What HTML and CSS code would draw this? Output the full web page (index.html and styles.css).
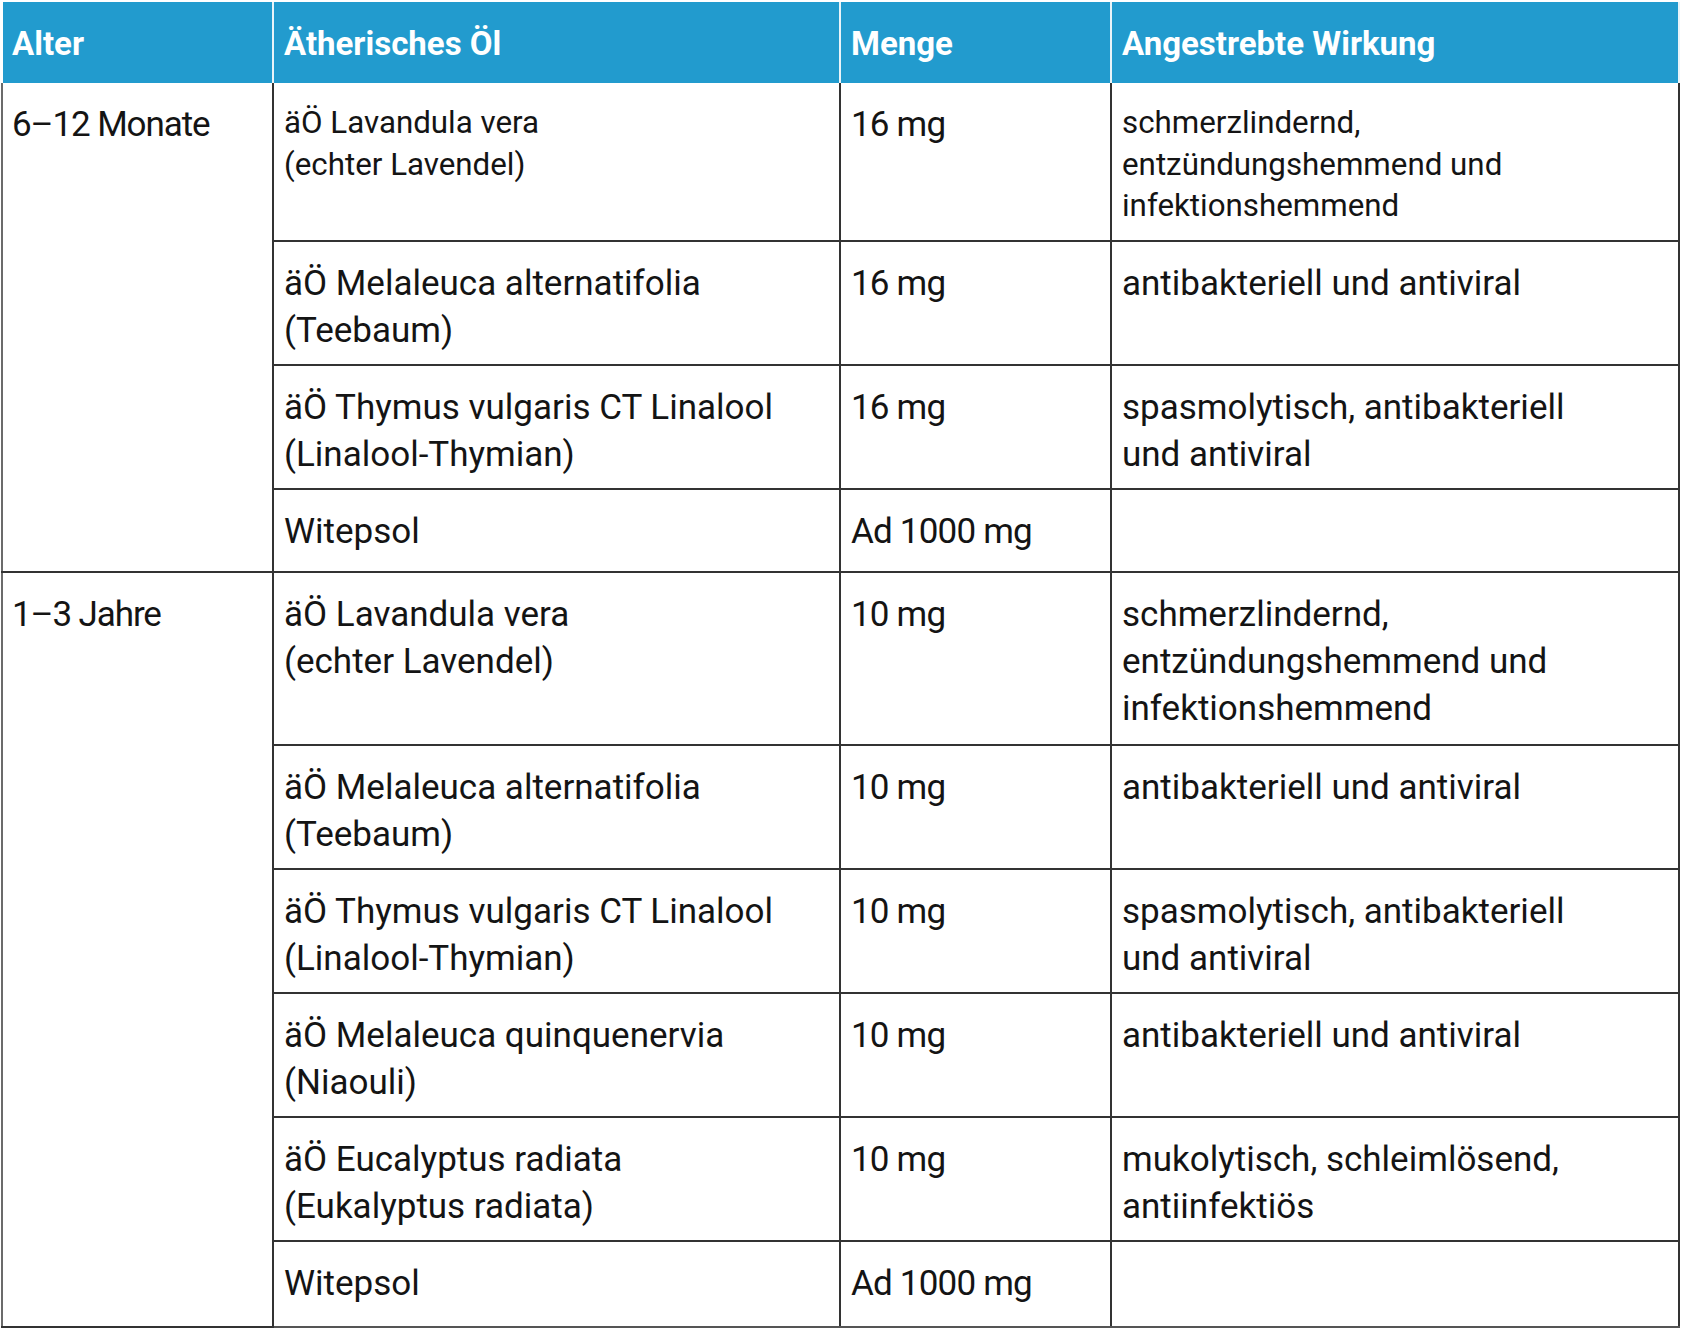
FILE: index.html
```html
<!DOCTYPE html>
<html lang="de">
<head>
<meta charset="utf-8">
<title>Ätherische Öle – Zäpfchen</title>
<link rel="stylesheet" href="styles.css">
</head>
<body>
<table class="oil-table">
  <colgroup>
    <col class="c-age">
    <col class="c-oil">
    <col class="c-amount">
    <col class="c-effect">
  </colgroup>
  <thead>
    <tr class="head">
      <th>Alter</th>
      <th>Ätherisches Öl</th>
      <th>Menge</th>
      <th>Angestrebte Wirkung</th>
    </tr>
  </thead>
  <tbody>
    <tr class="first">
      <td rowspan="4" class="age">6–12 Monate</td>
      <td class="small">äÖ Lavandula vera<br>(echter Lavendel)</td>
      <td class="amount">16 mg</td>
      <td class="small">schmerzlindernd,<br>entzündungshemmend und<br>infektionshemmend</td>
    </tr>
    <tr>
      <td>äÖ Melaleuca alternatifolia<br>(Teebaum)</td>
      <td class="amount">16 mg</td>
      <td>antibakteriell und antiviral</td>
    </tr>
    <tr>
      <td>äÖ Thymus vulgaris CT Linalool<br>(Linalool-Thymian)</td>
      <td class="amount">16 mg</td>
      <td>spasmolytisch, antibakteriell<br>und antiviral</td>
    </tr>
    <tr class="base">
      <td>Witepsol</td>
      <td class="amount">Ad 1000 mg</td>
      <td></td>
    </tr>
    <tr class="tall">
      <td rowspan="6" class="age">1–3 Jahre</td>
      <td>äÖ Lavandula vera<br>(echter Lavendel)</td>
      <td class="amount">10 mg</td>
      <td>schmerzlindernd,<br>entzündungshemmend und<br>infektionshemmend</td>
    </tr>
    <tr>
      <td>äÖ Melaleuca alternatifolia<br>(Teebaum)</td>
      <td class="amount">10 mg</td>
      <td>antibakteriell und antiviral</td>
    </tr>
    <tr>
      <td>äÖ Thymus vulgaris CT Linalool<br>(Linalool-Thymian)</td>
      <td class="amount">10 mg</td>
      <td>spasmolytisch, antibakteriell<br>und antiviral</td>
    </tr>
    <tr>
      <td>äÖ Melaleuca quinquenervia<br>(Niaouli)</td>
      <td class="amount">10 mg</td>
      <td>antibakteriell und antiviral</td>
    </tr>
    <tr>
      <td>äÖ Eucalyptus radiata<br>(Eukalyptus radiata)</td>
      <td class="amount">10 mg</td>
      <td>mukolytisch, schleimlösend,<br>antiinfektiös</td>
    </tr>
    <tr class="base last">
      <td>Witepsol</td>
      <td class="amount">Ad 1000 mg</td>
      <td></td>
    </tr>
  </tbody>
</table>
</body>
</html>
```
FILE: styles.css
```css
html, body {
  margin: 0;
  padding: 0;
  background: #ffffff;
}

body {
  padding: 2px 0 0 1px;
  font-family: Roboto, "Liberation Sans", Arial, sans-serif;
  color: #141414;
}

.oil-table {
  width: 1677px;
  table-layout: fixed;
  border-collapse: collapse;
  border-spacing: 0;
}

.c-age { width: 271px; }
.c-oil { width: 567px; }
.c-amount { width: 271px; }
.c-effect { width: 568px; }

.head th {
  background: #229bce;
  color: #ffffff;
  font-weight: 700;
  font-size: 33px;
  line-height: 40px;
  text-align: left;
  padding: 22px 10px 19px;
  border-left: 2px solid #e9f4f9;
  border-right: 2px solid #e9f4f9;
  white-space: nowrap;
}

.head th:first-child {
  border-left: 2px solid #ffffff;
  padding-left: 9px;
}

tbody td {
  font-size: 35px;
  letter-spacing: 0;
  line-height: 47px;
  vertical-align: top;
  text-align: left;
  padding: 18px 10px 10px;
  border: 2px solid #333333;
  white-space: nowrap;
}

tbody tr:first-child td {
  border-top: none;
}

tbody td.small {
  font-size: 31.3px;
  line-height: 41.5px;
  padding-top: 19px;
}

tbody td.amount {
  letter-spacing: -0.8px;
}

tbody tr.first td {
  height: 128px;
}

tbody tr.tall td {
  height: 143px;
}

tbody td.age {
  padding-left: 9px;
  letter-spacing: -1.1px;
  border-left-color: #6b6b6b;
}

tbody tr.base td {
  height: 53px;
}

tbody tr.last td {
  height: 56px;
  border-bottom-color: #555555;
}
```
